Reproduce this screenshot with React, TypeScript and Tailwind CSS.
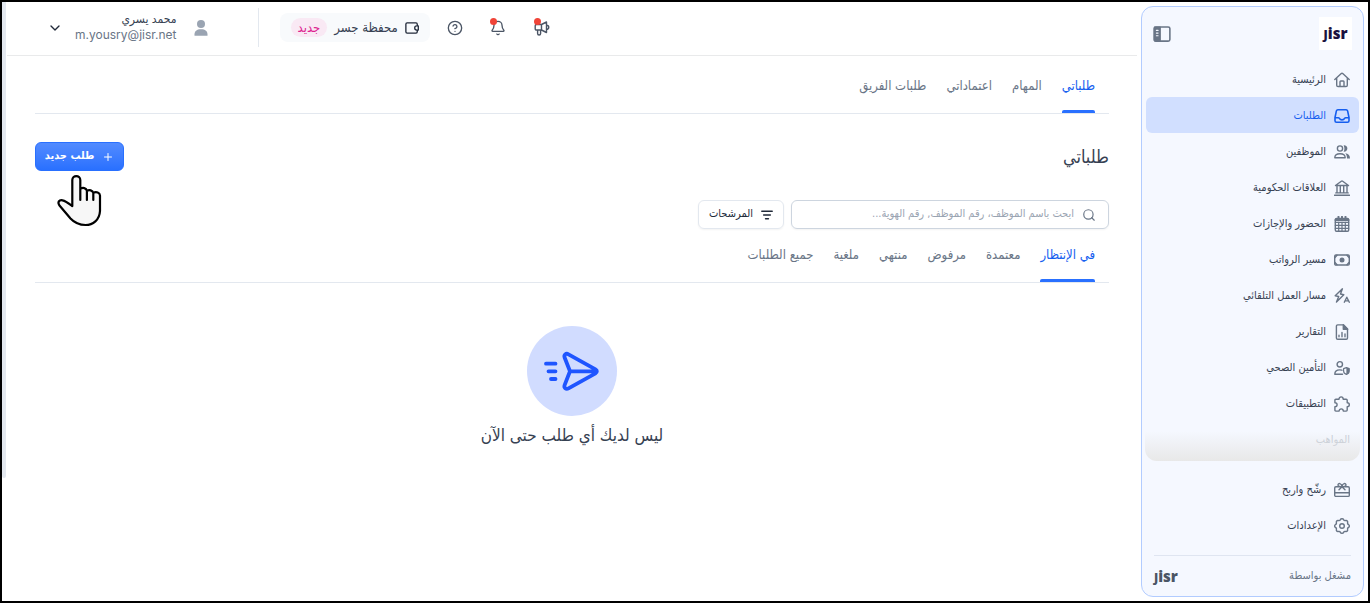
import React from 'react';
import { ChevronDown, CircleHelp, Bell, Plus, Search } from 'lucide-react';

interface IconProps {
  children: React.ReactNode;
  className?: string;
}

const Icon: React.FC<IconProps> = ({ children, className = 'w-4 h-4' }) => (
  <svg
    viewBox="0 0 16 16"
    className={`shrink-0 ${className}`}
    fill="none"
    stroke="currentColor"
    strokeWidth="1.4"
    strokeLinecap="round"
    strokeLinejoin="round"
    aria-hidden="true"
  >
    {children}
  </svg>
);

const mainLinks = [
  {
    label: 'الرئيسية',
    icon: (
      <Icon>
        <path d="M.8 7.6 7 1.8a1.5 1.5 0 0 1 2 0l6.200 5.800M2.700 6v7.200c0 .8.5 1.300 1.300 1.300h8c.8 0 1.300-.5 1.300-1.300V6M6 14.300V9.800c0-.5.3-.8.8-.8h2.400c.5 0 .8.3.8.8v4.500" />
      </Icon>
    ),
  },
  {
    label: 'الطلبات',
    active: true,
    icon: (
      <Icon>
        <path strokeWidth="1.600" d="M1 9.500 2.400 2.900c.2-.8.7-1.200 1.500-1.200h8.200c.8 0 1.300.4 1.500 1.200L15 9.500v3.300c0 .9-.6 1.500-1.500 1.500h-11c-.9 0-1.500-.6-1.500-1.500zM1 9.700h3.300c.6 0 .8.2 1.100.7.600 1.100 1.300 1.500 2.600 1.500s2-.4 2.600-1.500c.3-.5.5-.7 1.100-.7H15" />
      </Icon>
    ),
  },
  {
    label: 'الموظفين',
    icon: (
      <Icon>
        <circle cx="6" cy="4.500" r="2.600" />
        <path d="M.8 13.800c0-2.600 2-4 5.200-4s5.200 1.400 5.200 4z" />
        <path d="M9.600 1.400a3.200 3.200 0 1 1 0 6.300c1.100-1.900 1.100-4.400 0-6.300zM11.200 9.200c3 .2 4.800 2 4.800 5.200h-3c0-2-.5-3.800-1.800-5.200z" fill="currentColor" stroke="none" />
      </Icon>
    ),
  },
  {
    label: 'العلاقات الحكومية',
    icon: (
      <Icon>
        <path d="M1.500 5.500 7.300 1.200a1.200 1.200 0 0 1 1.400 0l5.800 4.300zM.6 15.200h14.800M1.800 12.900h12.400M3 6v6.500M6.300 6v6.500M9.700 6v6.500M13 6v6.500" />
      </Icon>
    ),
  },
  {
    label: 'الحضور والإجازات',
    icon: (
      <Icon>
        <rect x="1.300" y="2.500" width="13.400" height="12.700" rx="1.200" />
        <path d="M1.500 4h13M4.500.8v3M8 .8v3M11.500.8v3" strokeWidth="2" />
        <path d="M1.300 6.300h13.400M1.300 9.300h13.400M1.300 12.300h13.400M4.700 6v9M8 6v9M11.300 6v9" strokeWidth="1.200" />
      </Icon>
    ),
  },
  {
    label: 'مسير الرواتب',
    icon: (
      <Icon>
        <rect x=".7" y="3" width="14.600" height="10" rx="1.200" />
        <circle cx="8" cy="8" r="2.500" fill="currentColor" stroke="none" />
        <path d="M1 5.500 3 3.300M15 5.500l-2-2.200M1 10.500l2 2.200M15 10.500l-2 2.200" />
      </Icon>
    ),
  },
  {
    label: 'مسار العمل التلقائي',
    icon: (
      <Icon>
        <path d="M8.400.8 1.200 7.700l3.500.8-2.200 5.600 7.300-7.300-3.300-.8z" />
        <path d="m10.300 14.200 2.500-5 2.500 5M11 12.900h3.600" />
      </Icon>
    ),
  },
  {
    label: 'التقارير',
    icon: (
      <Icon>
        <path d="M3.700.9h5.800l4 4v9c0 .8-.5 1.300-1.300 1.300H3.700c-.8 0-1.300-.5-1.300-1.300V2.200c0-.8.5-1.300 1.300-1.300z" />
        <path d="M9.300.8v4.400h4.400z" fill="currentColor" />
        <path d="M5 12.700v-1.500M8 12.700V8.500M11 12.700V10" />
      </Icon>
    ),
  },
  {
    label: 'التأمين الصحي',
    icon: (
      <Icon>
        <circle cx="5.800" cy="4.300" r="2.700" />
        <path d="M8.500 14.200H.8c0-2.700 1.900-4.300 5-4.300.8 0 1.500.1 2.100.3" />
        <path d="m12.400 7.600 2.800 1v2.300c0 1.700-1 2.800-2.800 3.500-1.800-.7-2.800-1.800-2.800-3.500V8.600z" strokeWidth="1.200" />
        <path d="m12.400 7.600 2.800 1v2.300c0 1.700-1 2.800-2.800 3.500z" fill="currentColor" stroke="none" />
      </Icon>
    ),
  },
  {
    label: 'التطبيقات',
    icon: (
      <Icon>
        <path d="M5 3.300c0-3.200 4.200-3.200 4.200 0h3c.7 0 1 .4 1 1v2.500c2.800 0 2.800 3.900 0 3.900v3.400c0 .7-.3 1-1 1H9.300c0-3-4.200-3-4.200 0H1.900c-.7 0-1-.3-1-1v-3.300c2.900 0 2.900-4.100 0-4.100V4.300c0-.6.3-1 1-1z" />
      </Icon>
    ),
  },
];

const extraLinks = [
  {
    label: 'رشّح واربح',
    icon: (
      <Icon>
        <path d="M1.900 4.700h12.200c.7 0 1.200.5 1.200 1.200v7.300c0 .7-.5 1.200-1.200 1.200H1.900c-.7 0-1.200-.5-1.200-1.200V5.900c0-.7.5-1.200 1.200-1.200zM.8 10.700h14.400M8 4.700 5 7.800M8 4.700l3 3.100M8 4.500C6.500 4.700 4 4.600 4 2.900c0-2 3.700-2 4 1.600.3-3.600 4-3.600 4-1.600 0 1.700-2.500 1.800-4 1.600z" />
      </Icon>
    ),
  },
  {
    label: 'الإعدادات',
    icon: (
      <Icon>
        <path d="M6.400 1.600c.5-1.200 2.700-1.200 3.200 0 .4.900 1.200 1.200 2.100.9 1.300-.4 2.200.9 1.900 2.100-.2.900.1 1.500.9 1.900 1.100.6 1.100 2.400 0 3-.8.4-1.100 1-.9 1.900.3 1.200-.6 2.500-1.900 2.100-.9-.3-1.700 0-2.100.9-.5 1.200-2.700 1.200-3.200 0-.4-.9-1.200-1.200-2.100-.9-1.300.4-2.200-.9-1.900-2.100.2-.9-.1-1.500-.9-1.900-1.100-.6-1.100-2.400 0-3 .8-.4 1.100-1 .9-1.900-.3-1.200.6-2.500 1.900-2.100.9.300 1.700 0 2.100-.9z" />
        <circle cx="8" cy="8" r="2.300" />
      </Icon>
    ),
  },
];

const pageTabs = ['طلباتي', 'المهام', 'اعتماداتي', 'طلبات الفريق'];
const statusTabs = ['في الإنتظار', 'معتمدة', 'مرفوض', 'منتهي', 'ملغية', 'جميع الطلبات'];

const Logo: React.FC<{ className: string }> = ({ className }) => (
  <span dir="ltr" className={`font-['Open_Sans',sans-serif] text-[15px] leading-none font-extrabold ${className}`}>
    <span className="text-[12px]">J</span>isr
  </span>
);

const NavLink: React.FC<{ label: string; icon: React.ReactNode; active?: boolean }> = ({ label, icon, active }) => (
  <a
    href="#"
    className={`flex h-9 items-center gap-2 rounded-md px-[9px] pt-0.5 text-[11px] ${
      active ? 'bg-[#d1dfff] text-[#155eef]' : 'text-[#364152]'
    }`}
  >
    <span className={active ? 'text-[#155eef]' : 'text-[#697586]'}>{icon}</span>
    {label}
  </a>
);

const Sidebar = () => (
  <aside className="m-1 flex w-[223px] shrink-0 flex-col rounded-xl border border-[#b2ccff] bg-[#f5f8ff]">
    <div className="flex items-center justify-between px-[11px] pt-[10px] pb-[11px]">
      <div className="flex h-[33px] w-[33px] items-center justify-center bg-white">
        <Logo className="text-[#1b1140]" />
      </div>
      <button type="button" aria-label="طي القائمة" className="text-[#697586]">
        <Icon className="h-[18px] w-[18px]">
          <rect x="1" y="1.700" width="14" height="12.600" rx="1.500" />
          <path d="M1.500 2h4.800v12H1.500z" fill="currentColor" />
          <path d="M3 4.800h1.500M3 7.200h1.500M3 9.600h1.500" stroke="#f5f8ff" strokeWidth="1" />
        </Icon>
      </button>
    </div>

    <nav className="relative px-1 pb-1">
      {mainLinks.map((link) => (
        <NavLink key={link.label} {...link} />
      ))}
      <a href="#" className="flex h-9 items-center px-[9px] pt-0.5 text-[11px] text-[#9aa4b2]">
        المواهب
      </a>
      <div className="pointer-events-none absolute inset-x-[3px] bottom-0 h-[30px] rounded-b-xl bg-linear-to-b from-[#f5f8ff]/40 to-[#e8e8e8]" />
    </nav>

    <div className="mt-auto px-1">
      {extraLinks.map((link) => (
        <NavLink key={link.label} {...link} />
      ))}
    </div>

    <div className="mx-3 mt-3 flex h-[41px] items-center justify-between border-t border-[#dfe5f1] text-[11px] text-[#697586]">
      <span>مشغل بواسطة</span>
      <Logo className="text-[#4b5565]" />
    </div>
  </aside>
);

const Header = () => (
  <header className="flex h-[54px] items-center justify-end border-b border-[#e9eaeb] pb-0.5 pl-10 text-[#4b5565]">
    <button type="button" aria-label="الإعلانات" className="relative">
      <Icon className="h-4 w-4">
        <path d="M2.500 4.500h5L12.500 2v10.500l-5-2.500h-5c-.8 0-1.300-.5-1.300-1.300V5.800c0-.8.5-1.300 1.300-1.300zM7.500 4.500V10M12.500 5.200c3 0 3 4.200 0 4.200M3.600 10v3.500c0 2 3 2 3 0V10" />
      </Icon>
      <span className="absolute -top-0.5 left-0 h-[7px] w-[7px] rounded-full bg-[#f04438]" />
    </button>
    <button type="button" aria-label="الإشعارات" className="relative mr-7">
      <Bell className="h-4 w-4" strokeWidth={2} />
      <span className="absolute -top-0.5 left-0 h-[7px] w-[7px] rounded-full bg-[#f04438]" />
    </button>
    <button type="button" aria-label="المساعدة" className="mr-[27px]">
      <CircleHelp className="h-4 w-4" strokeWidth={2} />
    </button>
    <a href="#" className="mr-[17px] flex h-[29px] items-center gap-[7px] rounded-lg bg-[#f8fafc] px-[11px] text-[13px] text-[#364152]">
      <Icon className="h-[14px] w-[14px] text-[#202939]">
        <path strokeWidth="1.500" d="M14 5.500V3.600c0-.9-.5-1.400-1.400-1.400H2.400C1.500 2.200 1 2.700 1 3.600v8.800c0 .9.5 1.400 1.400 1.400h10.200c.9 0 1.400-.5 1.400-1.400v-1.900M13.500 5.600h1.700v4.800h-1.700a2.400 2.400 0 0 1 0-4.800z" />
      </Icon>
      محفظة جسر
      <span className="rounded-full bg-[#f9e9f4] px-[7px] text-[#dd2590]">جديد</span>
    </a>
    <div className="mr-[21px] h-[39px] w-px bg-[#e3e8ef]" />
    <button type="button" aria-label="حساب المستخدم" className="mr-[49px] flex items-center">
      <Icon className="h-4 w-4 text-[#9aa4b2]">
        <circle cx="8" cy="4" r="4" fill="currentColor" stroke="none" />
        <path d="M1.500 15.700v-1.500c0-3 2.200-5 6.500-5s6.500 2 6.500 5v1.500z" fill="currentColor" stroke="none" />
      </Icon>
      <span className="mr-4 flex flex-col items-start pb-0.5 text-[12px] leading-[15px]">
        <span className="text-[#364152]">محمد يسري</span>
        <span dir="ltr" className="font-['Inter',sans-serif] text-[#697586]">m.yousry@jisr.net</span>
      </span>
      <ChevronDown className="mr-3 h-4 w-4 text-[#202939]" strokeWidth={2} />
    </button>
  </header>
);

const Tabs: React.FC<{ items: string[] }> = ({ items }) => (
  <div role="tablist" className="flex gap-5 border-b border-[#e3e8ef] px-[14px] text-[13px]">
    {items.map((item, i) => (
      <button
        key={item}
        type="button"
        role="tab"
        aria-selected={i === 0}
        className={`flex h-[41px] flex-col justify-between pt-1 ${i === 0 ? 'text-[#155eef]' : 'text-[#697586]'}`}
      >
        <span className="leading-5">{item}</span>
        {i === 0 && <span className="h-[3px] w-full rounded-t-xs bg-[#2970ff]" />}
      </button>
    ))}
  </div>
);

const EmptyState = () => (
  <div className="flex flex-col items-center pt-[43px]">
    <svg viewBox="0 0 90 90" className="h-[90px] w-[90px]" fill="none" stroke="#1f55ff" strokeWidth="3.800" strokeLinecap="round" strokeLinejoin="round" aria-hidden="true">
      <circle cx="45" cy="45" r="45" fill="#d1dcff" stroke="none" />
      <path d="M41.500 28.300 68.500 43.300c1.800 1 1.800 3 0 4L41.500 62.300c-2.600 1.400-4.800-.6-3.900-3.200L43 45.300 37.600 31.500c-.9-2.600 1.300-4.600 3.900-3.200zM43 45.300h26M19 37.700h9.500M21.500 45.300h7M24 53h4.500" />
    </svg>
    <p className="mt-[7px] text-[17px] leading-6 text-[#364152]">ليس لديك أي طلب حتى الآن</p>
  </div>
);

const HandPointer = () => (
  <svg
    viewBox="0 0 46 53"
    className="pointer-events-none absolute top-8 left-[21px] h-[53px] w-[46px]"
    fill="#f7f7f7"
    stroke="#000"
    strokeWidth="2.200"
    strokeLinecap="round"
    strokeLinejoin="round"
    aria-hidden="true"
  >
    <path d="M16.300 32V6c0-5.300 8-5.300 8 0v9c2.500-2 6-1 6.600 1.800 2.500-1.300 5.600-.6 6.400 2 3-1.500 6.500-.3 6.700 2.700v15.500C43.500 46 37 51 29.500 51c-6 0-11-2.200-15-6.500L3.500 31.500c-2.300-3.300-.5-5.800 3-5.200 3.500.7 6.500 3.200 9.800 5.700zM24.300 15v11M30.900 17v9M37.300 19v7" />
  </svg>
);

export default function App() {
  return (
    <div
      dir="rtl"
      className="flex min-h-screen border-2 border-black bg-white font-['DejaVu_Sans_Condensed','DejaVu_Sans',sans-serif]"
    >
      <Sidebar />

      <div className="flex min-w-0 flex-1 flex-col pl-[5px]">
        <Header />
        <main className="px-7">
          <div className="pt-4">
            <Tabs items={pageTabs} />
          </div>

          <div className="mt-7 flex items-start justify-between">
            <h1 className="text-[18px] leading-[29px] text-[#364152]">طلباتي</h1>
            <div className="relative">
              <button
                type="button"
                className="flex h-[29px] w-[89px] items-center justify-center gap-2 rounded-md border border-[#2970ff] bg-linear-to-b from-[#528bff] to-[#2970ff] text-[11px] font-bold text-white"
              >
                <Plus className="h-3 w-3" />
                طلب جديد
              </button>
              <HandPointer />
            </div>
          </div>

          <div className="mt-[29px] mb-3 flex gap-[7px]">
            <label className="flex h-[29px] w-[318px] items-center gap-2 rounded-md border border-[#cdd5df] px-3 text-[#697586] shadow-xs">
              <Search className="h-3.5 w-3.5" />
              <input
                type="search"
                aria-label="بحث"
                placeholder="ابحث باسم الموظف، رقم الموظف, رقم الهوية..."
                className="min-w-0 flex-1 text-[11px] outline-none placeholder:text-[#9aa4b2]"
              />
            </label>
            <button
              type="button"
              className="flex h-[29px] w-[86px] items-center justify-center gap-2 rounded-md border border-[#e3e8ef] text-[11px] text-[#202939] shadow-xs"
            >
              <Icon className="h-3 w-3">
                <path d="M1 3h14M3.500 8h9M6 13h4" strokeWidth="1.800" />
              </Icon>
              المرشحات
            </button>
          </div>

          <Tabs items={statusTabs} />
          <EmptyState />
        </main>
      </div>

      {/* Page scroll thumb */}
      <div className="absolute top-0.5 left-0.5 h-[79vh] w-1 rounded-b-sm bg-[#e3e8ef]" />
    </div>
  );
}
